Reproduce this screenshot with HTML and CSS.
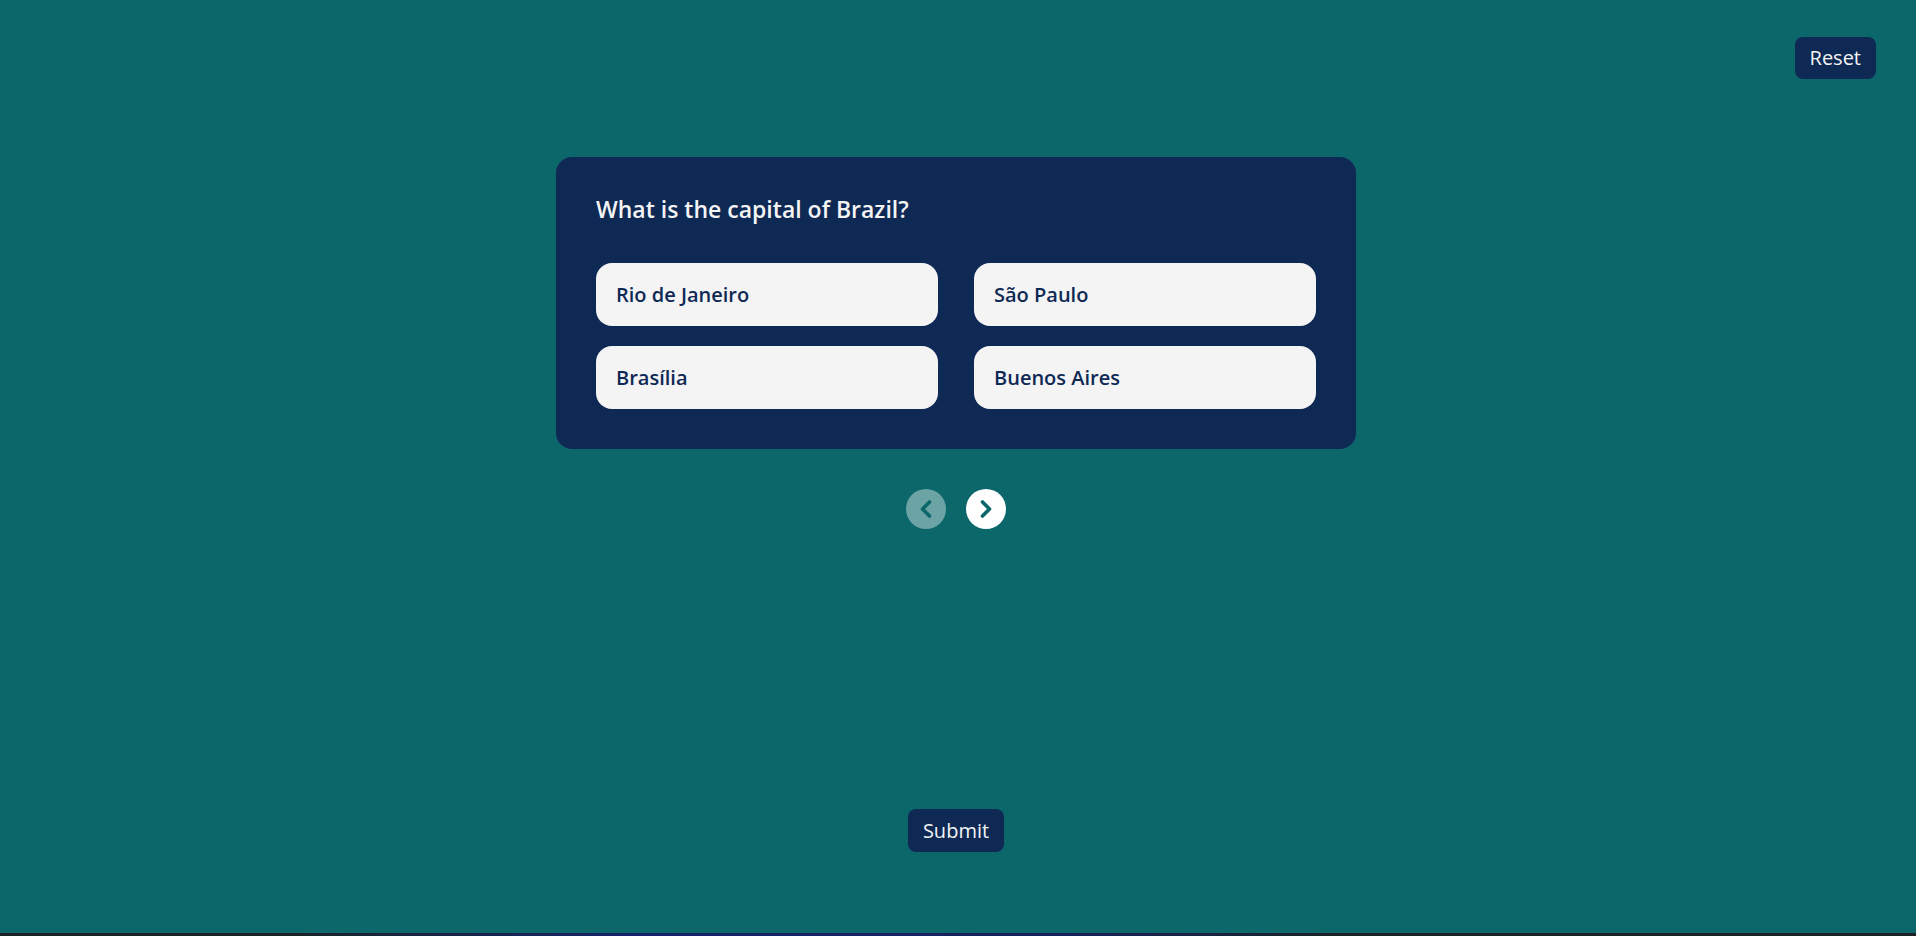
FILE: index.html
```html
<!DOCTYPE html>
<html lang="en">
<head>
<meta charset="utf-8">
<title>Quiz</title>
<link rel="stylesheet" href="styles.css">
</head>
<body>
<div class="page">
  <header class="topbar">
    <button class="btn">Reset</button>
  </header>
  <main class="main">
    <section class="card">
      <h2 class="question">What is the capital of Brazil?</h2>
      <div class="options">
        <button class="option">Rio de Janeiro</button>
        <button class="option">São Paulo</button>
        <button class="option">Brasília</button>
        <button class="option">Buenos Aires</button>
      </div>
    </section>
    <nav class="pager">
      <button class="nav nav-prev" aria-label="Previous">
        <svg viewBox="0 0 40 40" width="40" height="40"><path d="M23.5 13 L16.5 20 L23.5 27" fill="none" stroke="#0b676a" stroke-width="3.6" stroke-linecap="round" stroke-linejoin="round"/></svg>
      </button>
      <button class="nav nav-next" aria-label="Next">
        <svg viewBox="0 0 40 40" width="40" height="40"><path d="M16.5 13 L23.5 20 L16.5 27" fill="none" stroke="#0b676a" stroke-width="3.6" stroke-linecap="round" stroke-linejoin="round"/></svg>
      </button>
    </nav>
    <button class="btn submit">Submit</button>
  </main>
  <div class="bottombar"></div>
</div>
</body>
</html>
```

FILE: styles.css
```css
* { box-sizing: border-box; }
html, body {
  margin: 0;
  padding: 0;
  background: #0b676a;
  font-family: "Open Sans", "Noto Sans", "Liberation Sans", sans-serif;
}
.page {
  min-height: 100vh;
  display: flex;
  flex-direction: column;
}
.topbar {
  display: flex;
  justify-content: flex-end;
  padding: 37px 40px 0 0;
}
.btn {
  font-family: inherit;
  font-size: 20px;
  font-weight: 400;
  line-height: 26px;
  padding: 8px 15px;
  height: 42px;
  color: #f4f4f4;
  background: #0f2955;
  border: none;
  border-radius: 8px;
}
.main {
  display: flex;
  flex-direction: column;
  align-items: center;
  padding-right: 4px;
  margin-top: 78px;
}
.card {
  width: 800px;
  background: #0f2955;
  border-radius: 16px;
  padding: 36px 40px 40px;
}
.question {
  margin: 0 0 38px;
  font-size: 23px;
  line-height: 32px;
  font-weight: 600;
  color: #f4f4f4;
}
.options {
  display: grid;
  grid-template-columns: 342px 342px;
  justify-content: space-between;
  row-gap: 20px;
}
.option {
  font-family: inherit;
  text-align: left;
  font-size: 20px;
  font-weight: 600;
  line-height: 31px;
  padding: 16px 20px;
  color: #0f2955;
  background: #f4f4f4;
  border: none;
  border-radius: 16px;
}
.pager {
  display: flex;
  gap: 20px;
  margin-top: 40px;
}
.nav {
  width: 40px;
  height: 40px;
  padding: 0;
  border: none;
  border-radius: 50%;
  display: flex;
  align-items: center;
  justify-content: center;
}
.nav svg { display: block; }
.nav-prev { background: rgba(255, 255, 255, 0.4); }
.nav-next { background: #ffffff; }
.submit {
  margin-top: 280px;
  height: 43px;
}
.bottombar {
  margin-top: auto;
  height: 3px;
  background: linear-gradient(90deg, #1b2326 0%, #1b2326 15%, #14236a 33%, #16205c 55%, #1b2326 70%, #1b2326 100%);
}
```
